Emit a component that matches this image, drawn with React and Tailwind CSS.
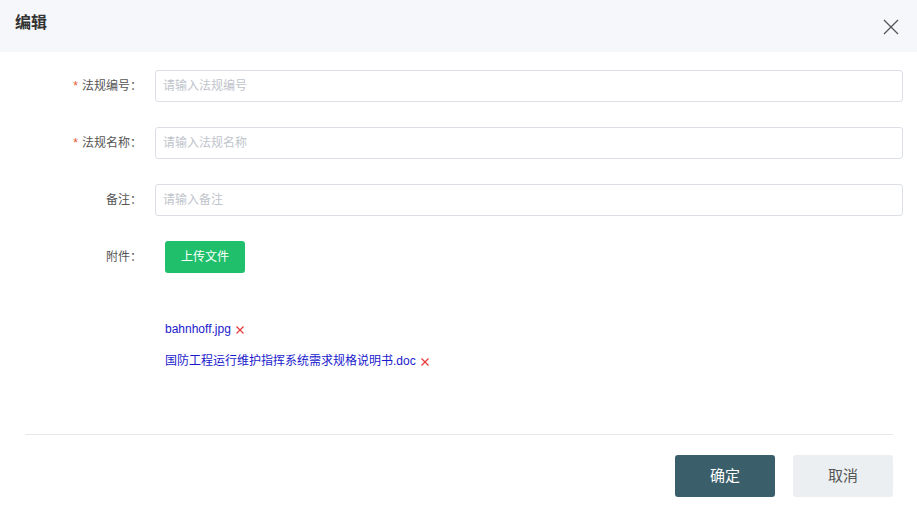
import React from "react";

const fields = [
  { label: "法规编号：", placeholder: "请输入法规编号", required: true },
  { label: "法规名称：", placeholder: "请输入法规名称", required: true },
  { label: "备注：", placeholder: "请输入备注", required: false },
];

const files = ["bahnhoff.jpg", "国防工程运行维护指挥系统需求规格说明书.doc"];

const App = () => {
  return (
    <div
      className="w-[917px] h-[520px] bg-white text-[#333]"
      style={{ fontFamily: '"Liberation Sans", "Noto Sans CJK SC", sans-serif' }}
    >
      {/* header */}
      <div className="h-[52px] bg-[#f6f7fa] flex items-center justify-between pl-[15px] pr-[17px]">
        <span className="text-[16px] font-bold text-[#333] -mt-[6px]">编辑</span>
        <svg width="18" height="18" viewBox="0 0 18 18" className="mt-[2px]">
          <path d="M2 2 L16 16 M16 2 L2 16" stroke="#555" strokeWidth="1.3" fill="none" />
        </svg>
      </div>

      {/* form */}
      <div className="pt-[18px] pr-[14px] flex flex-col gap-[25px]">
        {fields.map((f, i) => (
          <div key={i} className="flex items-center">
            <label className="w-[145px] text-right text-[12px] text-[#555] pr-[3px]">
              {f.required && <span className="text-[#e4572e] mr-[4px]">*</span>}
              {f.label}
            </label>
            <input
              className="ml-[10px] flex-1 h-[32px] border border-[#dcdfe6] rounded-[3px] px-[7px] text-[12px] outline-none placeholder:text-[#c0c4cc]"
              placeholder={f.placeholder}
            />
          </div>
        ))}
        <div className="flex items-start">
          <label className="w-[145px] text-right text-[12px] text-[#555] pr-[3px] pt-[7px]">附件：</label>
          <button className="ml-[20px] w-[80px] h-[32px] rounded-[3px] bg-[#1fbf6b] text-white text-[12px]">
            上传文件
          </button>
        </div>
      </div>

      {/* files */}
      <div className="pl-[165px] pt-[47px] flex flex-col gap-[14px]">
        {files.map((name, i) => (
          <div key={i} className="flex items-center text-[12px] leading-[18px] text-[#1a1acc]">
            {name}
            <svg width="8" height="8" viewBox="0 0 8 8" className="ml-[5px] mt-[1px]">
              <path d="M0.5 0.5 L7.5 7.5 M7.5 0.5 L0.5 7.5" stroke="#e53935" strokeWidth="1.2" fill="none" />
            </svg>
          </div>
        ))}
      </div>

      {/* footer */}
      <div className="ml-[25px] mr-[24px] mt-[64px] border-t border-[#e8e8e8] pt-[20px] flex justify-end gap-[18px]">
        <button className="w-[100px] h-[42px] rounded-[3px] bg-[#3b5e6b] text-white text-[15px]">确定</button>
        <button className="w-[100px] h-[42px] rounded-[3px] bg-[#eceff1] text-[#555] text-[15px]">取消</button>
      </div>
    </div>
  );
};

export default App;
